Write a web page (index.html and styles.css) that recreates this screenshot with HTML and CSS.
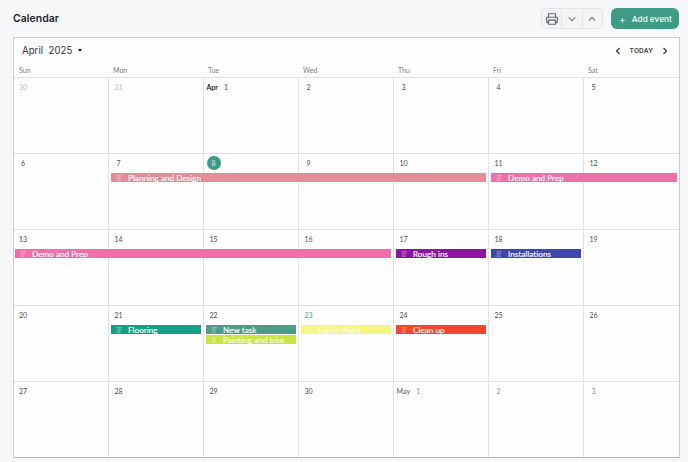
FILE: index.html
```html
<!DOCTYPE html>
<html lang="en">
  <head>
    <meta charset="utf-8" />
    <title>Calendar</title>
    <link rel="stylesheet" href="styles.css">
  </head>
  <body>
    <svg class="defs" width="0" height="0">
      <symbol id="task" viewBox="0 0 8 8">
        <path d="M3 1h4.500M1.500 4h5M3 7h3M2.200 0L1 1l1.200 1M2.200 6L1 7l1.200 1" fill="none" stroke="currentColor" stroke-width="0.700" />
      </symbol>
    </svg>
    <div class="header">
      <h2 class="title">Calendar</h2>
      <div class="actions">
        <div class="btn-group">
          <button class="icon-btn">
            <svg width="14" height="14" viewBox="0 0 24 24" fill="none" stroke="#62666d" stroke-width="2"><path d="M6 9V3h12v6" /><path d="M6 18H3v-9h18v9h-3" /><path d="M6 14h12v7H6z" /></svg>
          </button>
          <button class="icon-btn">
            <svg width="10" height="10" viewBox="0 0 12 12" fill="none" stroke="#777b82" stroke-width="1.300"><path d="M2 4l4 4 4-4" /></svg>
          </button>
          <button class="icon-btn">
            <svg width="10" height="10" viewBox="0 0 12 12" fill="none" stroke="#777b82" stroke-width="1.300"><path d="M2 8l4-4 4 4" /></svg>
          </button>
        </div>
        <button class="add-btn"><span class="plus">+</span>Add event</button>
      </div>
    </div>

    <div class="calendar">
      <div class="toolbar">
        <div class="month">April&nbsp; 2025 <span class="caret"></span></div>
        <div class="nav">
          <svg width="8" height="8" viewBox="0 0 8 8" fill="none" stroke="#333" stroke-width="1.200"><path d="M5.500 1L2.500 4l3 3" /></svg>
          <span class="today">TODAY</span>
          <svg width="8" height="8" viewBox="0 0 8 8" fill="none" stroke="#333" stroke-width="1.200"><path d="M2.500 1l3 3-3 3" /></svg>
        </div>
      </div>
      <div class="weekdays">
        <div>Sun</div><div>Mon</div><div>Tue</div><div>Wed</div><div>Thu</div><div>Fri</div><div>Sat</div>
      </div>

      <div class="week">
        <div class="day muted"><span class="num">30</span></div>
        <div class="day muted"><span class="num">31</span></div>
        <div class="day"><b class="mon">Apr</b><span class="num">1</span></div>
        <div class="day"><span class="num">2</span></div>
        <div class="day"><span class="num">3</span></div>
        <div class="day"><span class="num">4</span></div>
        <div class="day"><span class="num">5</span></div>
      </div>

      <div class="week">
        <div class="day"><span class="num">6</span></div>
        <div class="day"><span class="num">7</span></div>
        <div class="day"><span class="num now">8</span></div>
        <div class="day"><span class="num">9</span></div>
        <div class="day"><span class="num">10</span></div>
        <div class="day"><span class="num">11</span></div>
        <div class="day"><span class="num">12</span></div>
        <div class="event start-2 span-4 rose"><svg class="ev-icon"><use href="#task" /></svg>Planning and Design</div>
        <div class="event start-6 span-2 pink"><svg class="ev-icon"><use href="#task" /></svg>Demo and Prep</div>
      </div>

      <div class="week">
        <div class="day"><span class="num">13</span></div>
        <div class="day"><span class="num">14</span></div>
        <div class="day"><span class="num">15</span></div>
        <div class="day"><span class="num">16</span></div>
        <div class="day"><span class="num">17</span></div>
        <div class="day"><span class="num">18</span></div>
        <div class="day"><span class="num">19</span></div>
        <div class="event start-1 span-4 pink"><svg class="ev-icon"><use href="#task" /></svg>Demo and Prep</div>
        <div class="event start-5 purple"><svg class="ev-icon"><use href="#task" /></svg>Rough ins</div>
        <div class="event start-6 indigo"><svg class="ev-icon"><use href="#task" /></svg>Installations</div>
      </div>

      <div class="week">
        <div class="day"><span class="num">20</span></div>
        <div class="day"><span class="num">21</span></div>
        <div class="day"><span class="num">22</span></div>
        <div class="day teal-num"><span class="num">23</span></div>
        <div class="day"><span class="num">24</span></div>
        <div class="day"><span class="num">25</span></div>
        <div class="day"><span class="num">26</span></div>
        <div class="event start-2 green"><svg class="ev-icon"><use href="#task" /></svg>Flooring</div>
        <div class="event start-3 sage"><svg class="ev-icon"><use href="#task" /></svg>New task</div>
        <div class="event start-3 second lime"><svg class="ev-icon"><use href="#task" /></svg>Painting and trim</div>
        <div class="event start-4 yellow"><svg class="ev-icon"><use href="#task" /></svg>Finish Work</div>
        <div class="event start-5 red"><svg class="ev-icon"><use href="#task" /></svg>Clean up</div>
      </div>

      <div class="week">
        <div class="day"><span class="num">27</span></div>
        <div class="day"><span class="num">28</span></div>
        <div class="day"><span class="num">29</span></div>
        <div class="day"><span class="num">30</span></div>
        <div class="day grey"><b class="mon may">May</b><span class="num">1</span></div>
        <div class="day grey"><span class="num">2</span></div>
        <div class="day grey"><span class="num">3</span></div>
      </div>
    </div>
  </body>
</html>
```

FILE: styles.css
```css
* {
  margin: 0;
  box-sizing: border-box;
}
body {
  background-color: #f6f7f9;
  font-family: "Lato", "Liberation Sans", sans-serif;
  color: #2a2d33;
  padding: 8px 9px 0 13px;
  height: 462px;
  overflow: hidden;
}
.defs {
  position: absolute;
}
.header {
  height: 21px;
  margin-bottom: 8px;
  display: flex;
  justify-content: space-between;
  align-items: center;
}
.title {
  font-family: "Inter", sans-serif;
  font-size: 10.5px;
  font-weight: 600;
  color: #23262d;
}
.actions {
  display: flex;
  gap: 8px;
  align-items: center;
}
.btn-group {
  display: flex;
  width: 62px;
  height: 21px;
  border: 1px solid #e3e4e8;
  border-radius: 6px;
  background-color: #f4f5f7;
}
.icon-btn {
  flex: 1;
  padding: 0;
  border: 0;
  background: none;
  border-left: 1px solid #e3e4e8;
  display: flex;
  justify-content: center;
  align-items: center;
}
.icon-btn:first-child {
  border-left: 0;
}
.add-btn {
  width: 68px;
  height: 21px;
  border: 0;
  border-radius: 6px;
  background-color: #3f9b83;
  color: #e6f3ef;
  font-family: "Inter", sans-serif;
  font-size: 8.2px;
  font-weight: 600;
  padding: 0 0 0 1px;
  display: flex;
  align-items: center;
  justify-content: center;
}
.plus {
  font-size: 10px;
  font-weight: 400;
  margin-right: 6px;
}
.calendar {
  width: 667px;
  height: 421px;
  background-color: #fefefe;
  border: 1px solid #c9cbd0;
  border-bottom-color: #b5b7bc;
}
.toolbar {
  height: 25px;
  padding: 0 10px 0 8px;
  display: flex;
  justify-content: space-between;
  align-items: center;
}
.month {
  font-family: "Inter", sans-serif;
  font-size: 9.7px;
  color: #33363c;
  display: flex;
  align-items: center;
  white-space: pre;
}
.caret {
  display: inline-block;
  margin-left: 3px;
  border: 2.5px solid transparent;
  border-top: 3px solid #222;
  border-bottom: 0;
}
.nav {
  display: flex;
  align-items: center;
  gap: 8px;
}
.today {
  font-family: "Inter", sans-serif;
  font-size: 6.5px;
  font-weight: 600;
  letter-spacing: 0.2px;
  color: #3a3d43;
}
.weekdays {
  height: 15px;
  display: grid;
  grid-template-columns: 94px repeat(5, 95px) 96px;
  border-bottom: 1px solid #e1e2e5;
  font-size: 7px;
  color: #7a7d83;
}
.weekdays div {
  padding: 3px 0 0 5px;
}
.week {
  height: 76px;
  display: grid;
  grid-template-columns: 94px repeat(5, 95px) 96px;
  grid-template-rows: 19px 10px 9px 1fr;
  border-bottom: 1px solid #e1e2e5;
}
.week:last-child {
  border-bottom: 0;
  height: 75px;
}
.day {
  grid-row: 1 / -1;
  display: flex;
  align-items: flex-start;
  border-left: 1px solid #e1e2e5;
  font-size: 7px;
  color: #4c4f55;
  padding: 5px 0 0 2.5px;
}
.day:nth-child(1) { grid-column: 1; border-left: 0; padding-left: 2px; }
.day:nth-child(2) { grid-column: 2; }
.day:nth-child(3) { grid-column: 3; }
.day:nth-child(4) { grid-column: 4; }
.day:nth-child(5) { grid-column: 5; }
.day:nth-child(6) { grid-column: 6; }
.day:nth-child(7) { grid-column: 7; }
.num {
  width: 14px;
  text-align: center;
}
.muted { color: #b9bbbf; }
.grey { color: #909399; }
.teal-num { color: #4c9f8a; }
.mon {
  font-weight: 700;
  color: #2c2e33;
  margin-right: 1px;
}
.mon.may {
  color: #7d8086;
}
.now {
  display: flex;
  height: 14px;
  margin-top: -3px;
  border-radius: 50%;
  background-color: #3f9b83;
  color: #dff0eb;
  justify-content: center;
  align-items: center;
}
.event {
  grid-row: 2;
  margin: 0 2px 0 3px;
  height: 9px;
  display: flex;
  align-items: center;
  color: #fafafa;
  font-size: 8.2px;
  -webkit-text-stroke: 0.15px #fafafa;
  white-space: nowrap;
  overflow: hidden;
  padding-left: 5px;
  z-index: 1;
}
.event.second { grid-row: 3; }
.ev-icon {
  width: 6px;
  height: 6px;
  margin-right: 6px;
  flex: none;
}
.start-1 { grid-column-start: 1; margin-left: 1px; }
.start-2 { grid-column-start: 2; }
.start-3 { grid-column-start: 3; }
.start-4 { grid-column-start: 4; }
.start-5 { grid-column-start: 5; }
.start-6 { grid-column-start: 6; }
.span-2 { grid-column-end: span 2; }
.span-4 { grid-column-end: span 4; }
.rose { background-color: #e58c98; }
.pink { background-color: #ee6fa9; }
.purple { background-color: #8e159d; }
.indigo { background-color: #3f48aa; }
.green { background-color: #14a085; }
.sage { background-color: #4b9c88; }
.lime { background-color: #c9e445; }
.yellow { background-color: #f6f57f; }
.red { background-color: #f0492a; }
```
